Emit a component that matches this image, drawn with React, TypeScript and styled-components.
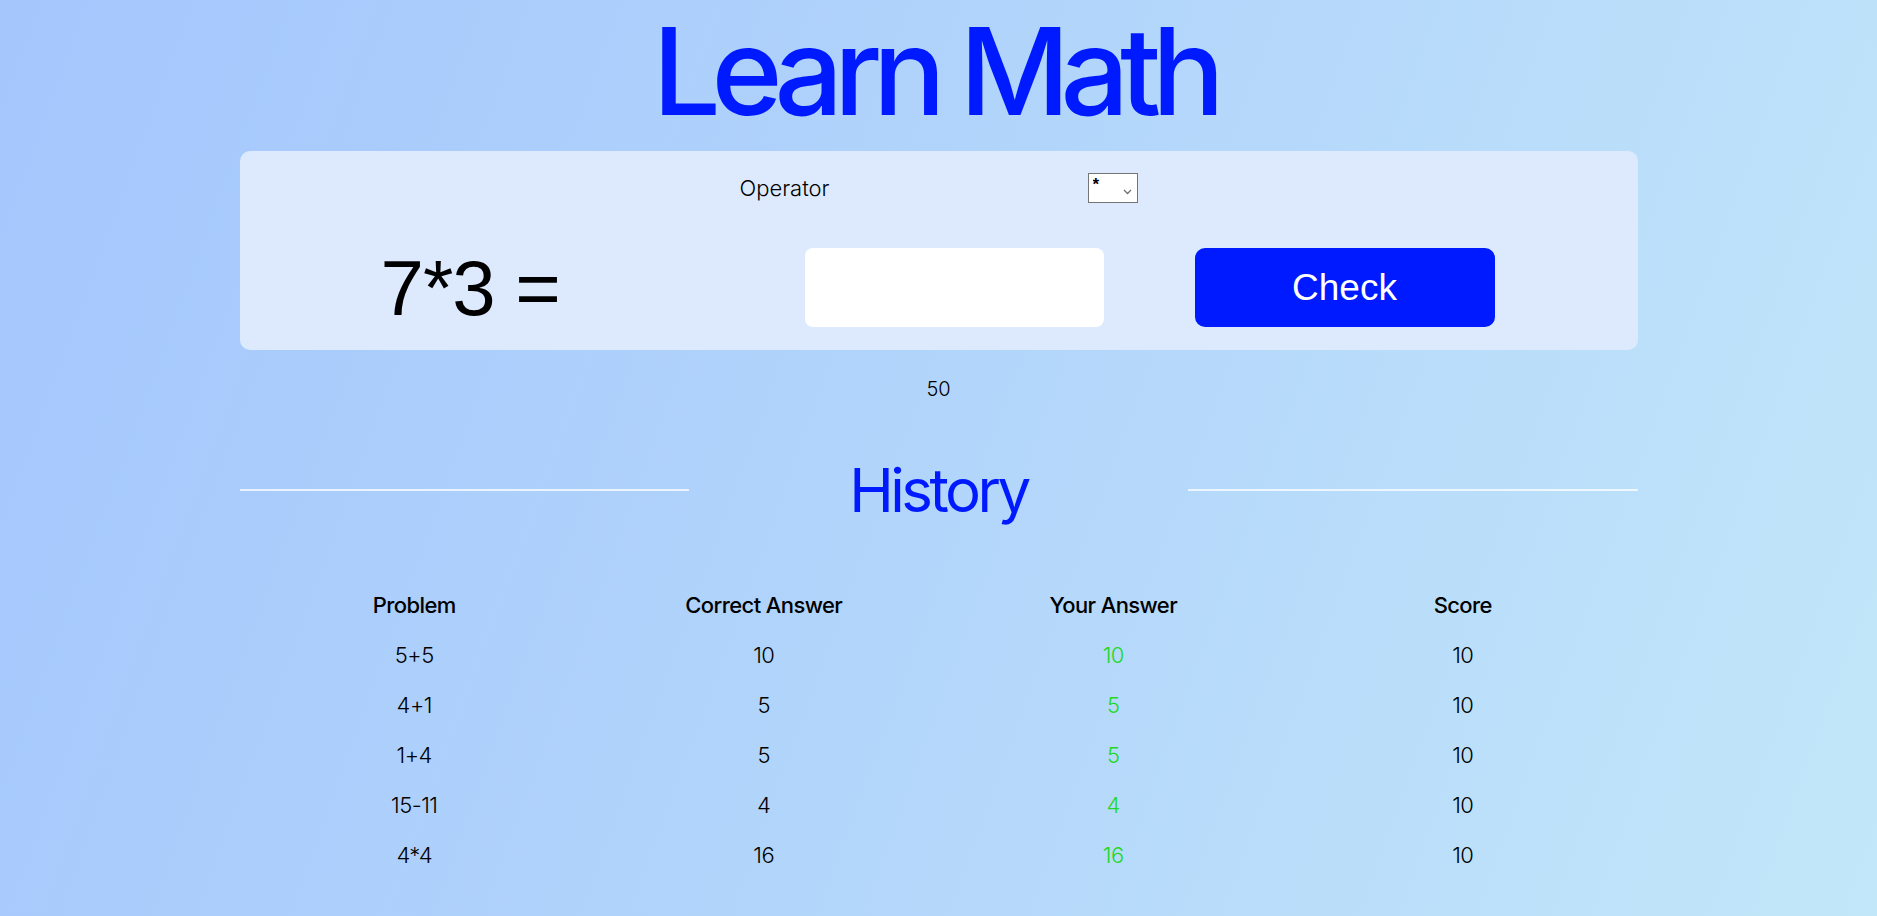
import React, { useState } from 'react';
import styled, { createGlobalStyle } from 'styled-components';

const GlobalStyle = createGlobalStyle`
  html, body {
    margin: 0;
    padding: 0;
  }

  body {
    min-height: 100vh;
    font-family: Inter, 'Noto Sans', sans-serif;
    color: #000;
    background: linear-gradient(110deg, #a4c6fd 0%, #b2d5fb 50%, #c2e7f9 100%);
    background-attachment: fixed;
  }
`;

const Page = styled.div`
  display: flex;
  flex-direction: column;
  align-items: center;
  padding-top: 2px;
`;

const Title = styled.h1`
  margin: 0;
  font-size: 121px;
  line-height: 1.15;
  font-weight: 500;
  letter-spacing: -9.3px;
  padding-right: 9px;
  color: #001aff;
`;

const Card = styled.div`
  width: 1398px;
  margin-top: 10px;
  padding: 22px 0 23px;
  box-sizing: border-box;
  background: #ddeafe;
  border-radius: 10px;
  display: flex;
  flex-direction: column;
  gap: 45px;
`;

const OperatorRow = styled.div`
  display: flex;
  justify-content: center;
  align-items: center;
  gap: 258px;
  height: 30px;
`;

const Label = styled.label`
  font-size: 22px;
  font-weight: 300;
`;

const SelectWrap = styled.div`
  position: relative;
  width: 50px;
  height: 30px;
`;

const Select = styled.select`
  appearance: none;
  width: 100%;
  height: 100%;
  margin: 0;
  padding: 0 0 8px 4px;
  font-family: 'Liberation Sans', Arial, sans-serif;
  font-size: 17px;
  font-weight: 700;
  background: #fff;
  border: 1px solid #767676;
  border-radius: 0;
  color: #000;
`;

const Chevron = styled.svg`
  position: absolute;
  right: 6px;
  top: 16px;
  pointer-events: none;
`;

const ProblemRow = styled.div`
  display: flex;
  align-items: center;
  padding-left: 141px;
  height: 79px;
`;

const ProblemText = styled.span`
  width: 424px;
  font-family: 'Liberation Sans', Arial, sans-serif;
  font-size: 78px;
  font-weight: 400;
  letter-spacing: -1px;
  line-height: 1;
`;

const AnswerInput = styled.input`
  width: 299px;
  height: 79px;
  box-sizing: border-box;
  border: none;
  border-radius: 8px;
  background: #fff;
  font-size: 32px;
  padding: 0 16px;
  outline: none;
`;

const CheckButton = styled.button`
  width: 300px;
  height: 79px;
  margin-left: 91px;
  border: none;
  border-radius: 10px;
  background: #001aff;
  color: #fff;
  font-family: 'Liberation Sans', Arial, sans-serif;
  font-size: 37px;
  font-weight: 400;
  cursor: pointer;
`;

const Score = styled.div`
  margin-top: 27px;
  font-size: 20px;
  font-weight: 300;
  line-height: 24px;
`;

const HistorySection = styled.section`
  width: 1398px;
  margin-top: 53px;
`;

const HistoryHeader = styled.div`
  display: grid;
  grid-template-columns: 1fr 499px 1fr;
  align-items: center;
`;

const Rule = styled.hr`
  margin: 0;
  border: none;
  height: 2px;
  background: rgba(255, 255, 255, 0.75);
`;

const HistoryTitle = styled.h2`
  margin: 0;
  text-align: center;
  font-size: 60px;
  line-height: 1.2;
  font-weight: 400;
  letter-spacing: -3.5px;
  color: #001aff;
`;

const Table = styled.table`
  width: 100%;
  margin-top: 54px;
  border-collapse: collapse;
  table-layout: fixed;
`;

const Th = styled.th`
  height: 50px;
  padding: 0;
  font-size: 22px;
  font-weight: 500;
  letter-spacing: -0.6px;
  text-align: center;
`;

const Td = styled.td<{ $correct?: boolean }>`
  height: 50px;
  padding: 0;
  font-size: 22px;
  font-weight: 300;
  letter-spacing: -0.5px;
  text-align: center;
  color: ${({ $correct }) => ($correct === undefined ? '#000' : $correct ? '#22d822' : '#e22')};
`;

type Entry = { problem: string; correct: number; answer: number; score: number };

const initialHistory: Entry[] = [
  { problem: '5+5', correct: 10, answer: 10, score: 10 },
  { problem: '4+1', correct: 5, answer: 5, score: 10 },
  { problem: '1+4', correct: 5, answer: 5, score: 10 },
  { problem: '15-11', correct: 4, answer: 4, score: 10 },
  { problem: '4*4', correct: 16, answer: 16, score: 10 },
];

const solve = (a: number, b: number, op: string) => {
  if (op === '+') return a + b;
  if (op === '-') return a - b;
  if (op === '*') return a * b;
  return Math.round(a / b);
};

const App = () => {
  const [operator, setOperator] = useState('*');
  const [pair, setPair] = useState([7, 3]);
  const [answer, setAnswer] = useState('');
  const [history, setHistory] = useState<Entry[]>(initialHistory);

  const total = history.reduce((sum, h) => sum + h.score, 0);

  const handleCheck = () => {
    const correct = solve(pair[0], pair[1], operator);
    const given = Number(answer);
    setHistory([
      ...history,
      { problem: `${pair[0]}${operator}${pair[1]}`, correct, answer: given, score: given === correct ? 10 : 0 },
    ]);
    setAnswer('');
    setPair([Math.ceil(Math.random() * 10), Math.ceil(Math.random() * 10)]);
  };

  return (
    <>
      <GlobalStyle />
      <Page>
        <Title>Learn Math</Title>
        <Card>
          <OperatorRow>
            <Label htmlFor="operator">Operator</Label>
            <SelectWrap>
              <Select id="operator" value={operator} onChange={(e) => setOperator(e.target.value)}>
                <option value="+">+</option>
                <option value="-">-</option>
                <option value="*">*</option>
                <option value="/">/</option>
              </Select>
              <Chevron width="9" height="6" viewBox="0 0 9 6">
                <path d="M1 1l3.5 3.5L8 1" fill="none" stroke="#707070" strokeWidth="1.3" />
              </Chevron>
            </SelectWrap>
          </OperatorRow>
          <ProblemRow>
            <ProblemText>
              {pair[0]}
              {operator}
              {pair[1]} =
            </ProblemText>
            <AnswerInput type="number" value={answer} onChange={(e) => setAnswer(e.target.value)} />
            <CheckButton onClick={handleCheck}>Check</CheckButton>
          </ProblemRow>
        </Card>
        <Score>{total}</Score>
        <HistorySection>
          <HistoryHeader>
            <Rule />
            <HistoryTitle>History</HistoryTitle>
            <Rule />
          </HistoryHeader>
          <Table>
            <thead>
              <tr>
                <Th>Problem</Th>
                <Th>Correct Answer</Th>
                <Th>Your Answer</Th>
                <Th>Score</Th>
              </tr>
            </thead>
            <tbody>
              {history.map((h, i) => (
                <tr key={i}>
                  <Td>{h.problem}</Td>
                  <Td>{h.correct}</Td>
                  <Td $correct={h.answer === h.correct}>{h.answer}</Td>
                  <Td>{h.score}</Td>
                </tr>
              ))}
            </tbody>
          </Table>
        </HistorySection>
      </Page>
    </>
  );
};

export default App;
